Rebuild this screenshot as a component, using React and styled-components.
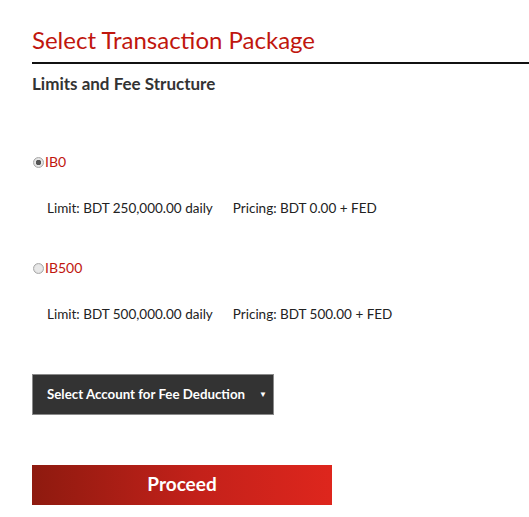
import React, {useState} from "react";
import styled, {createGlobalStyle} from 'styled-components';

const GlobalStyle = createGlobalStyle`
    html, body {
        margin: 0;
        padding: 0;
        background: #ffffff;
        font-family: "Lato", "Liberation Sans", sans-serif;
    }
`

const Page = styled.div`
    width: 529px;
    padding: 24px 0 0 32px;
    box-sizing: border-box;
`

const Title = styled.h1`
    margin: 0;
    font-size: 24px;
    font-weight: 400;
    line-height: 32px;
    color: #c0160e;
    padding-bottom: 6px;
    border-bottom: 2px solid #111111;
`

const SubTitle = styled.h2`
    margin: 9px 0 0 0;
    font-size: 17px;
    font-weight: 700;
    line-height: 22px;
    color: #333333;
`

const PackageList = styled.div`
    margin-top: 59px;
    display: flex;
    flex-direction: column;
    gap: 44px;
`

const Package = styled.div`
    display: flex;
    flex-direction: column;
    gap: 30px;
`

const RadioLabel = styled.label`
    display: flex;
    align-items: center;
    font-size: 14px;
    line-height: 16px;
    color: #c0160e;
    cursor: pointer;
`

const Radio = styled.span`
    width: 11px;
    height: 11px;
    border-radius: 50%;
    box-sizing: border-box;
    border: 1px solid #a8a8a8;
    background: radial-gradient(circle, ${props => props.checked ? '#555 0 2.5px, ' : ''}#e8e8e8 3px, #cfcfcf 100%);
    margin: 0 1px 0 1px;
`

const Details = styled.div`
    display: flex;
    gap: 20px;
    padding-left: 15px;
    font-size: 13.5px;
    line-height: 16px;
    color: #222222;
`

const SelectBox = styled.div`
    margin-top: 52px;
    width: 242px;
    height: 41px;
    box-sizing: border-box;
    background: #333333;
    border: 1px solid #8a8a8a;
    display: flex;
    align-items: center;
    justify-content: space-between;
    padding: 0 6px 2px 14px;
    color: #ffffff;
    font-size: 13.3px;
    font-weight: 700;
    white-space: nowrap;
`

const Arrow = styled.span`
    font-size: 8px;
`

const ProceedButton = styled.button`
    display: block;
    margin-top: 50px;
    width: 300px;
    height: 40px;
    padding: 0 0 3px 0;
    border: 0;
    background: linear-gradient(to right, #8e1a0f, #c3211a 55%, #de261d);
    color: #ffffff;
    font-family: inherit;
    font-size: 19px;
    font-weight: 700;
    cursor: pointer;
`

const packages = [
    {id: "IB0", limit: "250,000.00", price: "0.00"},
    {id: "IB500", limit: "500,000.00", price: "500.00"},
]

function App() {
    const [selected, setSelected] = useState("IB0");

    return (
        <Page>
            <GlobalStyle/>
            <Title>Select Transaction Package</Title>
            <SubTitle>Limits and Fee Structure</SubTitle>
            <PackageList>
                {packages.map(p => (
                    <Package key={p.id}>
                        <RadioLabel onClick={() => setSelected(p.id)}>
                            <Radio checked={selected === p.id}/>
                            {p.id}
                        </RadioLabel>
                        <Details>
                            <span>Limit: BDT {p.limit} daily</span>
                            <span>Pricing: BDT {p.price} + FED</span>
                        </Details>
                    </Package>
                ))}
            </PackageList>
            <SelectBox>
                <span>Select Account for Fee Deduction</span>
                <Arrow>▼</Arrow>
            </SelectBox>
            <ProceedButton>Proceed</ProceedButton>
        </Page>
    );
}

export default App;
